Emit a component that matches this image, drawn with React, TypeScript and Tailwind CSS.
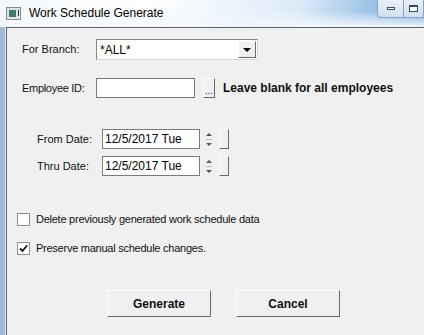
import React from "react";

const font = { fontFamily: '"Liberation Sans", Arial, sans-serif' };

function Raised({ className = "", children }: { className?: string; children?: React.ReactNode }) {
  return (
    <div
      className={`border border-t-white border-l-white border-r-[#696969] border-b-[#696969] bg-[#f0f0f0] ${className}`}
    >
      {children}
    </div>
  );
}

function Spinner() {
  return (
    <div className="flex items-center gap-[5px] ml-[4px]">
      <div className="flex flex-col items-center justify-center gap-[3px] w-[10px] h-[19px]">
        <div className="w-0 h-0 border-l-[3px] border-r-[3px] border-b-[3px] border-l-transparent border-r-transparent border-b-[#555]" />
        <div className="w-[6px] h-px bg-[#bbb]" />
        <div className="w-0 h-0 border-l-[3px] border-r-[3px] border-t-[3px] border-l-transparent border-r-transparent border-t-[#555]" />
      </div>
      <Raised className="w-[10px] h-[20px]" />
    </div>
  );
}

function Check({ checked }: { checked?: boolean }) {
  return (
    <div className="w-[13px] h-[13px] border border-[#8e8f8f] bg-white flex items-center justify-center">
      {checked && (
        <svg width="9" height="9" viewBox="0 0 9 9">
          <path d="M1 4.5 L3.5 7 L8 1.5" stroke="#111" strokeWidth="1.8" fill="none" />
        </svg>
      )}
    </div>
  );
}

function DateRow({ label }: { label: string }) {
  return (
    <div className="flex items-center h-[20px]">
      <span className="w-[15px]" />
      <span className="w-[65px]">{label}</span>
      <div className="w-[98px] h-[20px] border border-[#7a7a7a] bg-white text-[12px] leading-[18px] pl-[2px] text-black">
        12/5/2017 Tue
      </div>
      <Spinner />
    </div>
  );
}

export default function App() {
  return (
    <div className="w-[424px] h-[335px] overflow-hidden bg-[#f0f0f0] flex flex-col" style={font}>
      {/* title bar */}
      <div className="h-[27px] flex items-start bg-[linear-gradient(100deg,#f4f8fc_0%,#ffffff_35%,#dcebf8_70%,#6aa2d8_100%)] relative">
        <div className="absolute inset-0 bg-[linear-gradient(to_bottom,transparent_0%,transparent_40%,#f2f7fc_100%)]" />
        <div className="relative flex items-center h-[26px] pl-[6px] gap-[8px]">
          <div className="w-[15px] h-[13px] border border-[#8a8a8a] bg-[#dfe4ea] flex items-center pl-[2px] gap-[2px]">
            <div className="w-[7px] h-[7px] bg-[#3f7c6c]" />
            <div className="w-[1px] h-[6px] bg-[#333]" />
          </div>
          <span className="text-[12px] text-black">Work Schedule Generate</span>
        </div>
        <div className="relative ml-auto flex">
          <div className="w-[27px] h-[18px] border border-t-0 border-[#8aa3c0] rounded-bl-[4px] bg-[linear-gradient(to_bottom,#e8f0f8,#cfdff0)] flex items-center justify-center">
            <div className="w-[8px] h-[3px] border border-[#3b4a5c] bg-white" />
          </div>
          <div className="w-[20px] h-[18px] border border-t-0 border-l-0 border-[#8aa3c0] bg-[linear-gradient(to_bottom,#e8f0f8,#cfdff0)] flex items-center justify-center">
            <div className="w-[9px] h-[7px] border border-[#3b4a5c] border-t-2 bg-white" />
          </div>
        </div>
      </div>

      <div className="flex flex-1">
        <div className="w-[5px] bg-[#a0bcd8]" />
        <div className="w-px bg-[#e6eef6]" />
        <div className="w-px bg-[#5e6368]" />
        <div className="flex-1 border-t border-[#5e6368] text-[11px] text-[#111]">
          <div className="pl-[15px] pt-[11px]">
            <div className="flex items-center h-[21px]">
              <span className="w-[74px]">For Branch:</span>
              <div className="w-[162px] h-[21px] bg-white border border-t-[#828790] border-l-[#828790] border-r-[#d5d5d5] border-b-[#d5d5d5] flex items-center">
                <span className="flex-1 pl-[3px] text-black text-[12px]">*ALL*</span>
                <Raised className="w-[18px] h-[17px] mr-[1px] flex items-center justify-center bg-[#ececec]">
                  <div className="w-0 h-0 border-l-[4px] border-r-[4px] border-t-[4px] border-l-transparent border-r-transparent border-t-black" />
                </Raised>
              </div>
            </div>

            <div className="flex items-center h-[20px] mt-[18px]">
              <span className="w-[74px] tracking-[-0.3px]">Employee ID:</span>
              <div className="w-[99px] h-[20px] bg-white border border-[#7a7a7a]" />
              <Raised className="w-[12px] h-[20px] ml-[8px] flex items-end justify-center text-[10px] leading-[12px] text-[#222]">
                ...
              </Raised>
              <span className="ml-[8px] font-bold text-[12px] text-[#111]">Leave blank for all employees</span>
            </div>

            <div className="mt-[31px] flex flex-col gap-[7px]">
              <DateRow label="From Date:" />
              <DateRow label="Thru Date:" />
            </div>

            <div className="mt-[37px] flex flex-col gap-[16px] -ml-[5px] tracking-[-0.25px]">
              <div className="flex items-center gap-[6px] h-[13px]">
                <Check />
                <span>Delete previously generated work schedule data</span>
              </div>
              <div className="flex items-center gap-[6px] h-[13px]">
                <Check checked />
                <span>Preserve manual schedule changes.</span>
              </div>
            </div>

            <div className="mt-[35px] flex gap-[25px] pl-[85px]">
              <Raised className="w-[104px] h-[27px] flex items-center justify-center font-bold text-[12px] text-[#111]">
                Generate
              </Raised>
              <Raised className="w-[104px] h-[27px] flex items-center justify-center font-bold text-[12px] text-[#111]">
                Cancel
              </Raised>
            </div>
          </div>
        </div>
      </div>
    </div>
  );
}
